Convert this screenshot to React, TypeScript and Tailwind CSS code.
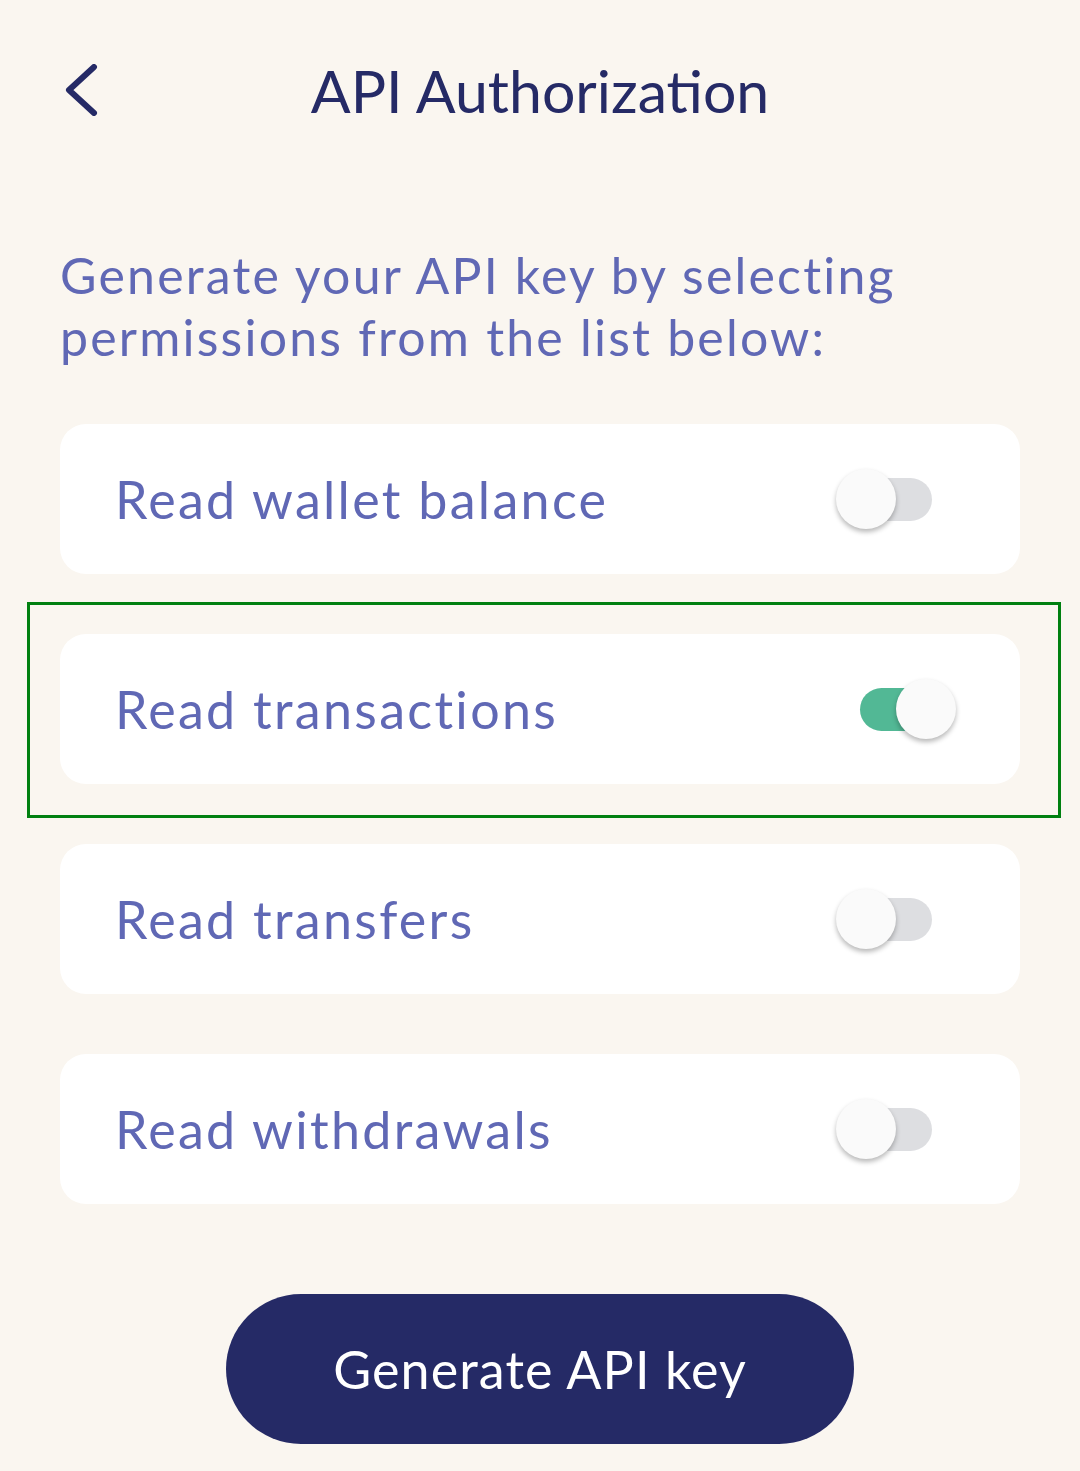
import { useState } from "react";

/* =======================
   TOGGLE
======================= */

function Toggle({ on, onChange }: { on: boolean; onChange: () => void }) {
  return (
    <button
      type="button"
      onClick={onChange}
      className="relative flex h-[60px] w-[120px] items-center justify-center"
    >
      <span
        className={`h-[43px] w-[72px] rounded-full ${
          on ? "bg-[#52b895]" : "bg-[#dddee1]"
        }`}
      />
      <span
        className={`absolute top-0 h-[60px] w-[60px] rounded-full bg-[#fafafa] shadow-[0_3px_5px_rgba(0,0,0,0.28)] ${
          on ? "left-[60px]" : "left-0"
        }`}
      />
    </button>
  );
}

/* =======================
   PERMISSION ROW
======================= */

function PermissionRow({
  label,
  on,
  onChange,
}: {
  label: string;
  on: boolean;
  onChange: () => void;
}) {
  return (
    <div className="flex h-[150px] items-center justify-between rounded-[26px] bg-white pl-[55px] pr-[64px]">
      <span className="text-[52px] leading-none tracking-[2.3px] text-[#6068b5]">
        {label}
      </span>
      <Toggle on={on} onChange={onChange} />
    </div>
  );
}

/* =======================
   PAGE
======================= */

export default function App() {
  const [perms, setPerms] = useState([
    { label: "Read wallet balance", on: false },
    { label: "Read transactions", on: true },
    { label: "Read transfers", on: false },
    { label: "Read withdrawals", on: false },
  ]);

  const toggle = (i: number) =>
    setPerms((p) => p.map((x, j) => (j === i ? { ...x, on: !x.on } : x)));

  return (
    <div
      className="min-h-screen bg-[#faf6f0] px-[60px]"
      style={{ fontFamily: "Lato, 'Noto Sans', sans-serif" }}
    >
      {/* ===== HEADER ===== */}
      <header className="grid h-[180px] grid-cols-[1fr_auto_1fr] items-center">
        <button type="button" className="-ml-[2px] flex h-[60px] w-[50px] items-center">
          <svg width="40" height="52" viewBox="0 0 40 52" fill="none">
            <path
              d="M36 3 L11 26 L36 49"
              stroke="#252a66"
              strokeWidth="6"
              strokeLinecap="round"
              strokeLinejoin="round"
            />
          </svg>
        </button>
        <h1 className="text-[59px] leading-none text-[#252a66]">
          API Authorization
        </h1>
        <div />
      </header>

      {/* ===== INTRO ===== */}
      <p className="mt-[64px] text-[50px] leading-[62px] tracking-[2.2px] text-[#6068b5]">
        Generate your API key by selecting
        <br />
        permissions from the list below:
      </p>

      {/* ===== PERMISSIONS ===== */}
      <div className="mt-[56px] flex flex-col gap-[60px]">
        {perms.map((p, i) => (
          <div key={p.label} className="relative">
            <PermissionRow label={p.label} on={p.on} onChange={() => toggle(i)} />
            {i === 1 && (
              <div className="pointer-events-none absolute -top-[32px] -bottom-[34px] -left-[33px] -right-[41px] border-[3px] border-[#008010]" />
            )}
          </div>
        ))}
      </div>

      {/* ===== GENERATE ===== */}
      <div className="mt-[90px] flex justify-center">
        <button
          type="button"
          className="h-[150px] w-[628px] rounded-full bg-[#252a66] text-[52px] tracking-[1.1px] text-white"
        >
          Generate API key
        </button>
      </div>
    </div>
  );
}
